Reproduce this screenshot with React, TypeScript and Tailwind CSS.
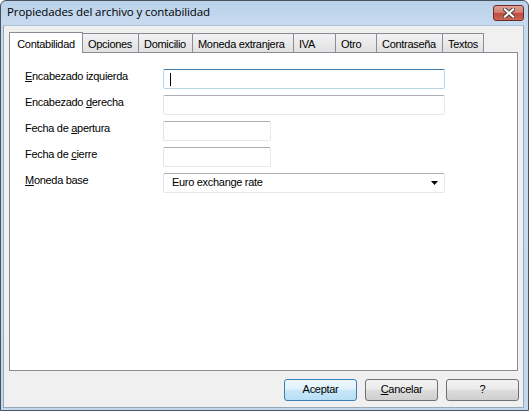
import React from "react";

const body = { fontFamily: '"Liberation Sans", Arial, sans-serif' };

function Tab({ label, selected, w }: { label: string; selected?: boolean; w: string }) {
  if (selected) {
    return (
      <div className={`relative z-10 -mb-px flex h-[21px] items-start justify-center border border-b-0 border-[#898c95] bg-white pt-[3px] ${w}`}>
        {label}
      </div>
    );
  }
  return (
    <div className={`-ml-px flex h-[19px] items-start border border-b-0 border-[#898c95] bg-gradient-to-b from-[#f3f3f3] to-[#e1e1e1] pl-[5px] pt-[2px] ${w}`}>
      {label}
    </div>
  );
}

function TextBox({ width, focused }: { width: string; focused?: boolean }) {
  return (
    <div
      className={`relative h-[20px] rounded-[2px] border bg-white ${width} ${
        focused
          ? "border-[#b5d7ee] border-t-[#3d7bad]"
          : "border-[#e3e9ef] border-t-[#abadb3] border-l-[#e2e3ea]"
      }`}
    >
      {focused && <div className="absolute left-[6px] top-[3px] h-[13px] w-px bg-black" />}
    </div>
  );
}

function Row({ children, label }: { children: React.ReactNode; label: React.ReactNode }) {
  return (
    <div className="flex h-[20px] items-start">
      <div className="w-[138px] pt-[1px] leading-[13px]">{label}</div>
      {children}
    </div>
  );
}

function Button({ children, primary }: { children: React.ReactNode; primary?: boolean }) {
  return (
    <div
      className={`flex h-[22px] w-[73px] items-center justify-center rounded-[3px] border ${
        primary
          ? "border-[#3c7fb1] bg-[linear-gradient(to_bottom,#ecf7fd_0%,#e2f2fb_45%,#c9e8f9_50%,#b6def6_100%)]"
          : "border-[#707070] bg-[linear-gradient(to_bottom,#f2f2f2_0%,#ebebeb_45%,#dddddd_50%,#cfcfcf_100%)]"
      }`}
    >
      <div className="pb-px">{children}</div>
    </div>
  );
}

export default function App() {
  return (
    <div className="h-[411px] w-[529px] overflow-hidden bg-white">
      <div className="flex h-[411px] w-[529px] flex-col rounded-t-[6px] border border-[#48525c] bg-[linear-gradient(to_bottom,#b9d1ea_0px,#c7dbef_24px,#c3d8ee_100%)]">
        {/* caption */}
        <div className="relative flex h-[24px] shrink-0 items-center pl-[6px]">
          <span
            className="pb-[2px] text-[11.5px] tracking-[-0.1px] text-black"
            style={{ fontFamily: '"Open Sans", "Noto Sans", sans-serif' }}
          >
            Propiedades del archivo y contabilidad
          </span>
          <div className="absolute right-[4px] top-[4px] flex h-[16px] w-[31px] items-center justify-center rounded-[3px] border border-[#6e2b25] bg-[linear-gradient(to_bottom,#e0a195_0%,#d27f72_45%,#c14a3c_55%,#c76a5a_100%)]">
            <svg width="12" height="10" viewBox="0 0 12 10">
              <path d="M2 1.5 L10 8.5 M10 1.5 L2 8.5" stroke="#4a3b3b" strokeWidth="4" strokeLinecap="square" />
              <path d="M2 1.5 L10 8.5 M10 1.5 L2 8.5" stroke="#ffffff" strokeWidth="2.2" strokeLinecap="square" />
            </svg>
          </div>
        </div>

        {/* client area */}
        <div
          className="ml-[2px] mr-[4px] mb-[2px] flex flex-1 flex-col border border-[#97a8ba] border-t-[#b0c3d8] bg-[#f0f0f0] text-[11px] tracking-[-0.3px] text-black"
          style={body}
        >
          <div className="flex flex-1 flex-col pl-[5px] pr-[4px] pt-[6px]">
            {/* tab strip */}
            <div className="flex items-end">
              <Tab label="Contabilidad" selected w="w-[74px]" />
              <Tab label="Opciones" w="w-[57px]" />
              <Tab label="Domicilio" w="w-[55px]" />
              <Tab label="Moneda extranjera" w="w-[102px]" />
              <Tab label="IVA" w="w-[43px]" />
              <Tab label="Otro" w="w-[42px]" />
              <Tab label="Contraseña" w="w-[67px]" />
              <Tab label="Textos" w="w-[42px]" />
            </div>

            {/* tab page */}
            <div className="h-[319px] w-[509px] border border-[#898c95] bg-white pl-[15px] pt-[16px]">
              <div className="flex flex-col gap-[6px]">
                <Row
                  label={
                    <>
                      <u>E</u>ncabezado izquierda
                    </>
                  }
                >
                  <TextBox width="w-[282px]" focused />
                </Row>
                <Row
                  label={
                    <>
                      Encabezado <u>d</u>erecha
                    </>
                  }
                >
                  <TextBox width="w-[282px]" />
                </Row>
                <Row
                  label={
                    <>
                      Fecha de <u>a</u>pertura
                    </>
                  }
                >
                  <TextBox width="w-[108px]" />
                </Row>
                <Row
                  label={
                    <>
                      Fecha de <u>c</u>ierre
                    </>
                  }
                >
                  <TextBox width="w-[108px]" />
                </Row>
                <Row
                  label={
                    <>
                      <u>M</u>oneda base
                    </>
                  }
                >
                  <div className="flex h-[20px] w-[282px] items-center justify-between rounded-[2px] border border-[#e3e9ef] border-t-[#abadb3] border-l-[#e2e3ea] bg-white pl-[8px] pr-[4px]">
                    <span className="pb-px">Euro exchange rate</span>
                    <svg width="8" height="5" viewBox="0 0 8 5" className="mr-[1px]">
                      <path d="M0 0 H7 L3.5 4 Z" fill="#000" />
                    </svg>
                  </div>
                </Row>
              </div>
            </div>

            {/* dialog buttons */}
            <div className="flex justify-end gap-[8px] pt-[8px]">
              <Button primary>Aceptar</Button>
              <Button>
                <u>C</u>ancelar
              </Button>
              <Button>?</Button>
            </div>
          </div>
        </div>
      </div>
    </div>
  );
}
